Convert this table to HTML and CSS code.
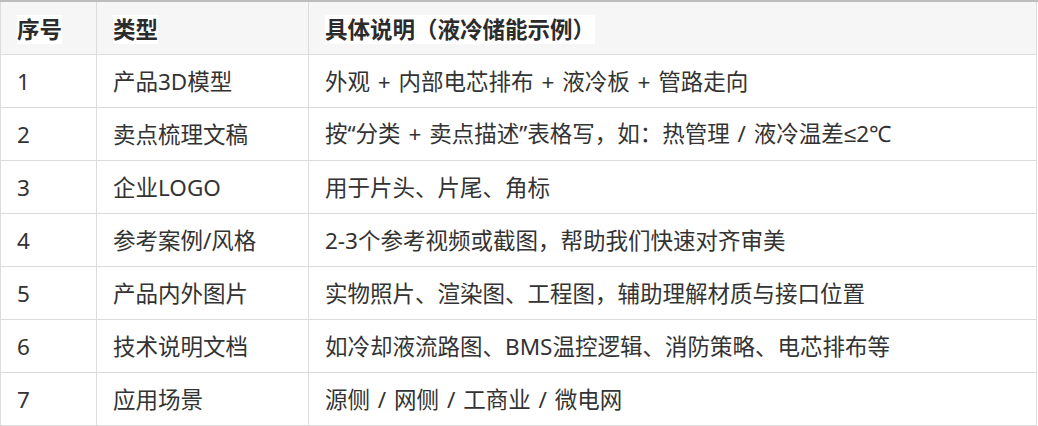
FILE: index.html
```html
<!DOCTYPE html>
<html lang="zh-CN">
<head>
<meta charset="utf-8">
<link rel="stylesheet" href="styles.css">
</head>
<body>
<div class="wrap">
<table class="sheet">
  <colgroup>
    <col class="c1"><col class="c2"><col class="c3">
  </colgroup>
  <thead>
    <tr>
      <th><span class="hl">序号</span></th>
      <th><span class="hl">类型</span></th>
      <th><span class="hl">具体说明（液冷储能示例）</span></th>
    </tr>
  </thead>
  <tbody>
    <tr><td>1</td><td>产品3D模型</td><td>外观 + 内部电芯排布 + 液冷板 + 管路走向</td></tr>
    <tr><td>2</td><td>卖点梳理文稿</td><td>按“分类 + 卖点描述”表格写，如：热管理 / 液冷温差<span class="sym">≤</span>2℃</td></tr>
    <tr><td>3</td><td>企业LOGO</td><td>用于片头、片尾、角标</td></tr>
    <tr><td>4</td><td>参考案例/风格</td><td>2-3个参考视频或截图，帮助我们快速对齐审美</td></tr>
    <tr><td>5</td><td>产品内外图片</td><td>实物照片、渲染图、工程图，辅助理解材质与接口位置</td></tr>
    <tr><td>6</td><td>技术说明文档</td><td>如冷却液流路图、BMS温控逻辑、消防策略、电芯排布等</td></tr>
    <tr><td>7</td><td>应用场景</td><td>源侧 / 网侧 / 工商业 / 微电网</td></tr>
  </tbody>
</table>
</div>
</body>
</html>
```

FILE: styles.css
```css
html, body {
  margin: 0;
  padding: 0;
  background: #fff;
}
.wrap {
  border-top: 2px solid #bdbdbd;
}
.sheet {
  width: 1036px;
  border-collapse: collapse;
  table-layout: fixed;
  font-family: "Noto Sans", "Noto Sans CJK SC", sans-serif;
  font-size: 22.5px;
  color: #333;
  word-spacing: 2px;
}
.c1 { width: 96px; }
.c2 { width: 212px; }
.c3 { width: 728px; }
.sheet th,
.sheet td {
  border: 1px solid #dcdcdc;
  border-top: none;
  height: 52px;
  padding: 0 15px 0 16px;
  text-align: left;
  vertical-align: middle;
  line-height: 29px;
  white-space: nowrap;
}
.sheet th {
  background: #f6f6f6;
  font-weight: 700;
  color: #2b2b2b;
}
.hl {
  display: inline-block;
  background: #fff;
  line-height: 29px;
  vertical-align: middle;
}
.sym {
  font-family: "Liberation Sans", "DejaVu Sans", sans-serif;
}
```
